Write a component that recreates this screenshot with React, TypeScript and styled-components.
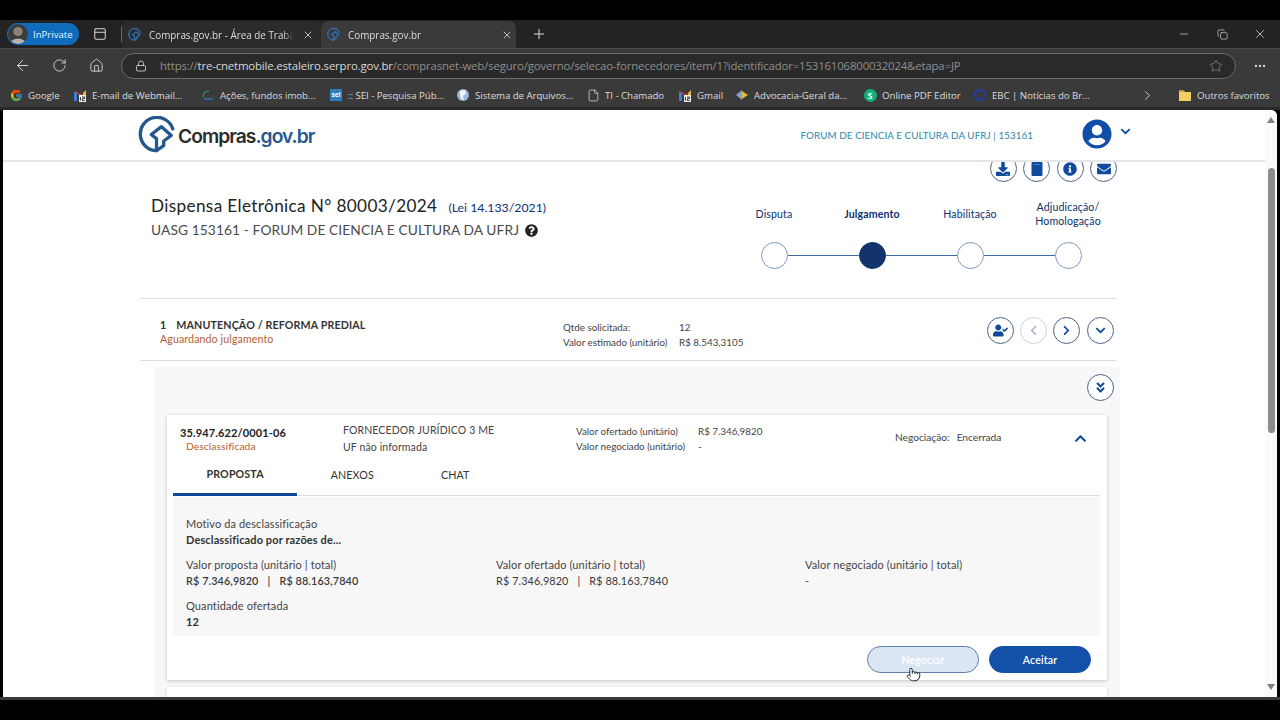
import React from "react";
import styled, { createGlobalStyle } from "styled-components";
import { ArrowLeft, RotateCw, Home, Lock, Star, MoreHorizontal, X, Plus, Minus, Copy, ChevronRight, File, Pointer, PanelTop } from "lucide-react";
import { FaDownload, FaInfoCircle, FaEnvelope, FaUserCheck, FaChevronLeft, FaChevronRight, FaChevronDown, FaChevronUp, FaAngleDoubleDown, FaQuestionCircle, FaUserCircle } from "react-icons/fa";
import { FcGoogle } from "react-icons/fc";

const Global = createGlobalStyle`
  html, body { margin: 0; padding: 0; background: #000; overflow: hidden; }
  * { box-sizing: border-box; }
`;

const Screen = styled.div`
  width: 1280px; height: 720px; background: #000; display: flex; flex-direction: column; overflow: hidden;
  font-family: "Open Sans", "Noto Sans", sans-serif;
`;
const TabStrip = styled.div`
  margin-top: 20px; height: 28px; background: #232323; display: flex; align-items: flex-end; color: #ddd; font-size: 9.9px; flex: none;
`;
const Pill = styled.div`
  margin: 0 0 3px 7px; width: 72px; height: 22px; border-radius: 11px; background: #0f6cbd; color: #e8f2fb;
  display: flex; align-items: center; gap: 5px; font-size: 9.6px;
`;
const Avatar = styled.span`
  width: 20px; height: 20px; margin-left: 1px; border-radius: 50%; background: #3c3c3c; overflow: hidden; display: block; flex: none;
`;
const StripIcon = styled.span`
  width: 42px; height: 28px; display: flex; align-items: center; justify-content: center; color: #e6e6e6;
`;
const Divider = styled.span`
  width: 1px; height: 16px; background: #666; margin-bottom: 6px; flex: none;
`;
const Tab = styled.div<{ $active?: boolean }>`
  width: ${p => (p.$active ? 195 : 199)}px; height: 27px; padding: 0 ${p => (p.$active ? 3 : 7)}px 0 6px; display: flex; align-items: center;
  gap: 8px; border-radius: 7px 7px 0 0; background: ${p => (p.$active ? "#3a3a3a" : "#2b2b2b")}; white-space: nowrap; flex: none;
`;
const TabLabel = styled.span`
  flex: 1; min-width: 0; overflow: hidden; padding-right: 4px; -webkit-mask-image: linear-gradient(90deg, #000 92%, transparent);
`;
const NewTab = styled.span`
  width: 46px; height: 28px; display: flex; align-items: center; justify-content: center; color: #e6e6e6;
`;
const WindowControls = styled.div`
  margin-left: auto; display: flex; height: 28px; align-items: center; color: #e0e0e0; padding-right: 1px;
`;
const WinBtn = styled.span`
  width: 38px; display: flex; justify-content: center;
`;
const Toolbar = styled.div`
  height: 35px; background: #3a3a3a; box-shadow: inset 0 1px 0 #4a4a4a; display: flex; align-items: center; padding-left: 4px; color: #dcdcdc; flex: none; overflow: hidden;
`;
const NavBtn = styled.span`
  width: 37px; flex: none; display: flex; justify-content: center;
`;
const Address = styled.div`
  width: 1115px; height: 26px; margin-left: 6px; border: 1px solid #6a6a6a; border-radius: 13px; background: #2a2a2a; flex: none;
  display: flex; align-items: center; padding: 0 12px 0 13px; gap: 13px; font-size: 11.4px; color: #8e8e8e; white-space: nowrap; overflow: hidden;
`;
const Url = styled.span`
  flex: 1; min-width: 0; overflow: hidden; letter-spacing: -0.16px;
`;
const Host = styled.span`
  color: #d8d8d8;
`;
const More = styled.span`
  width: 47px; flex: none; display: flex; justify-content: center;
`;
const Bookmarks = styled.div`
  height: 24px; background: #3a3a3a; display: flex; align-items: center; padding-left: 9px; font-size: 9.7px; color: #dadada; flex: none; white-space: nowrap;
`;
const Bookmark = styled.div<{ $w: number }>`
  width: ${p => p.$w}px; flex: none; display: flex; align-items: center; gap: 5px; letter-spacing: -0.05px;
`;
const BookmarkIcon = styled.span`
  width: 14px; height: 14px; flex: none; display: flex; align-items: center; justify-content: center;
`;
const SeiBadge = styled.span`
  width: 12px; height: 12px; background: #2d7fc1; color: #fff; font-size: 6.5px; font-weight: 700; line-height: 12px; text-align: center; display: block;
`;
const SBadge = styled.span`
  width: 13px; height: 13px; border-radius: 50%; background: #10b07b; color: #fff; font-size: 9px; font-weight: 700; line-height: 13px; text-align: center; display: block;
`;
const OverflowMark = styled.div`
  width: 38px; margin-left: 25px; flex: none; display: flex; align-items: center;
`;
const GapBar = styled.div`
  height: 3px; background: #2a2a2a; flex: none;
`;
const Viewport = styled.div`
  height: 587px; margin: 0 3px; background: #fff; border-radius: 0 6px 0 0; display: flex; flex: none; overflow: hidden;
  font-family: "Lato", "Open Sans", sans-serif; color: #333; font-size: 10.6px; letter-spacing: 0.12px;
`;
const BottomEdge = styled.div`
  height: 3px; background: #3a3a3a; flex: none;
`;
const Page = styled.div`
  flex: 1; min-width: 0; display: flex; flex-direction: column; overflow: hidden;
`;
const Header = styled.header`
  position: relative; z-index: 2; height: 52px; flex: none; background: #fff; border-bottom: 2px solid #e6e6e6;
  display: flex; align-items: center; padding: 0 134px 2px 135px;
`;
const Brand = styled.div`
  display: flex; align-items: center; gap: 3px; font-family: "Inter", sans-serif; font-size: 19.2px; font-weight: 600; letter-spacing: -0.95px; color: #2c2c2c;
`;
const BrandText = styled.span`
  margin-top: 4px;
`;
const BrandGov = styled.span`
  color: #25588f;
`;
const Org = styled.span`
  margin-left: auto; color: #2d86ad; font-size: 9.8px; letter-spacing: 0.08px; margin-top: 1px;
`;
const UserArea = styled.div`
  margin-left: 49px; display: flex; align-items: flex-start; gap: 8px; color: #0f4ea8;
`;
const CaretWrap = styled.span`
  display: flex; margin-top: 7px;
`;
const Main = styled.main`
  width: 976px; margin-left: 138px; display: flex; flex-direction: column;
`;
const TopActions = styled.div`
  display: flex; justify-content: flex-end; gap: 6.4px; margin-top: -7px;
`;
const Round = styled.span<{ $off?: boolean }>`
  width: 27px; height: 27px; border-radius: 50%; flex: none; background: #fff; display: flex; align-items: center; justify-content: center;
  border: 1px solid ${p => (p.$off ? "#c6d2dd" : "#4d6488")}; color: ${p => (p.$off ? "#a9bacb" : "#0f4a9c")};
`;
const Summary = styled.section`
  display: flex; justify-content: space-between; padding: 14px 0 29px 10px; border-bottom: 1px solid #ddd;
`;
const TitleBlock = styled.div`
  display: flex; flex-direction: column;
`;
const TitleRow = styled.div`
  display: flex; align-items: baseline; gap: 11px; font-size: 17.2px; color: #222; line-height: 20px; letter-spacing: 0.35px;
`;
const Law = styled.span`
  font-size: 12.3px; color: #0c326f; letter-spacing: 0;
`;
const Uasg = styled.div`
  margin-top: 2px; display: flex; align-items: center; gap: 6px; font-size: 13.75px; color: #4a4a4a; line-height: 20px; letter-spacing: 0.1px;
`;
const HelpIcon = styled.span`
  display: flex; color: #222;
`;
const Stepper = styled.div`
  width: 392px; display: flex; padding-top: 4px;
`;
const Step = styled.div`
  width: 98px; display: flex; flex-direction: column; align-items: center;
`;
const StepLabel = styled.div<{ $on?: boolean }>`
  height: 28px; display: flex; align-items: center; text-align: center; line-height: 14px; color: #0c326f;
  font-weight: ${p => (p.$on ? 700 : 400)}; font-size: 10.6px;
`;
const Track = styled.div`
  margin-top: 14px; width: 100%; display: flex; align-items: center;
`;
const Line = styled.span<{ $none?: boolean }>`
  flex: 1; height: 1px; background: ${p => (p.$none ? "transparent" : "#3f6b9f")};
`;
const Dot = styled.span<{ $on?: boolean }>`
  width: 27px; height: 27px; border-radius: 50%; flex: none; border: 1px solid ${p => (p.$on ? "#12336b" : "#7d99ba")};
  background: ${p => (p.$on ? "#12336b" : "#fff")};
`;
const ItemRow = styled.section`
  height: 62px; display: flex; align-items: center; padding: 0 3.5px 0 19px; border-bottom: 1px solid #ddd;
`;
const ItemInfo = styled.div`
  width: 403px; margin-top: 5px; display: flex; flex-direction: column; line-height: 15px;
`;
const ItemTitle = styled.div`
  font-size: 10.7px; font-weight: 700; color: #333; display: flex; gap: 10px;
`;
const Warn = styled.div`
  color: #b5602f;
`;
const Pairs = styled.div<{ $col: number; $drop?: number }>`
  display: grid; grid-template-columns: ${p => p.$col}px auto; line-height: 15px; color: #444; font-size: 9.8px; letter-spacing: 0;
  margin-top: ${p => p.$drop ?? 0}px;
`;
const RoundGroup = styled.div`
  margin-left: auto; margin-top: 1px; display: flex; gap: 6.2px;
`;
const Panel = styled.section`
  margin: 6px 0 0 13px; width: 966px; background: #f8f8f8; padding: 7px 6px 0 13px; display: flex; flex-direction: column;
`;
const PanelTools = styled.div`
  display: flex; justify-content: flex-end; margin-bottom: 14px;
`;
const Card = styled.article`
  width: 940px; flex: none; background: #fff; box-shadow: 0 1px 4px rgba(0,0,0,.22); padding: 0 7px 0 6px;
`;
const CardTop = styled.div`
  height: 47px; display: grid; grid-template-columns: 163px 233px 319px 1fr; padding-left: 7px; align-items: center;
`;
const Cnpj = styled.div`
  color: #222; font-weight: 700; font-size: 11px; line-height: 15px; margin-top: 1px;
`;
const Status = styled(Warn)`
  font-weight: 400; font-size: 10.2px; padding-left: 6px; line-height: 13px;
`;
const Supplier = styled.div`
  line-height: 17px; font-size: 10.5px; color: #444; margin-top: 1px;
`;
const Negotiation = styled.div`
  display: flex; align-items: center; gap: 7px; color: #444; padding-right: 20px; font-size: 10.2px; letter-spacing: 0; margin-top: -3px;
`;
const Collapse = styled.span`
  margin-left: auto; margin-top: 2px; margin-right: -7px; display: flex; color: #0f4a9c;
`;
const Tabs = styled.nav`
  height: 34px; display: flex; border-bottom: 1px solid #ddd; margin-bottom: 1px; font-size: 10.7px; color: #333;
`;
const TabLink = styled.div<{ $on?: boolean }>`
  padding: 0 33.5px 9px; height: 34px; display: flex; align-items: center;
  font-weight: ${p => (p.$on ? 700 : 400)}; border-bottom: ${p => (p.$on ? "3px solid #0f4496" : "none")};
`;
const Detail = styled.div`
  height: 139px; background: #f7f7f7; padding: 19px 13px 6px; display: flex; flex-direction: column; gap: 9px; line-height: 16px; font-size: 11px; color: #444;
`;
const DetailGrid = styled.div`
  display: grid; grid-template-columns: 310px 309px 1fr;
`;
const Strong = styled.div`
  font-weight: 700; color: #333;
`;
const Money = styled.div<{ $strong?: boolean }>`
  display: flex; font-size: 10.8px; gap: 9px; color: #3a3a3a; font-weight: ${p => (p.$strong ? 600 : 400)};
`;
const Actions = styled.div`
  display: flex; justify-content: flex-end; gap: 10px; padding: 10px 9px 7px 0;
`;
const Btn = styled.span<{ $ghost?: boolean }>`
  position: relative; height: 27px; width: ${p => (p.$ghost ? 112 : 102)}px; border-radius: 14px; display: flex; align-items: center; justify-content: center;
  font-weight: 600; color: #fff; font-size: 10.6px;
  background: ${p => (p.$ghost ? "#dbe6f5" : "#1351a8")}; border: 1px solid ${p => (p.$ghost ? "#5d7ea8" : "#1351a8")};
`;
const Cursor = styled.span`
  position: absolute; left: 38px; top: 20px; display: flex; color: #222;
`;
const NextCard = styled.div`
  margin-top: 7px; width: 940px; height: 30px; flex: none; background: #fff; box-shadow: 0 1px 4px rgba(0,0,0,.15);
`;
const Scrollbar = styled.div`
  width: 12px; flex: none; background: #fafafa; display: flex; flex-direction: column; align-items: center; padding-top: 7px;
`;
const Thumb = styled.div`
  width: 7px; height: 265px; margin-top: 45px; border-radius: 4px; background: #8b8b8b;
`;
const Arrow = styled.span<{ $down?: boolean }>`
  width: 0; height: 0; border-left: 4px solid transparent; border-right: 4px solid transparent; flex: none;
  ${p => (p.$down ? "border-top: 6px solid #7f7f7f; margin-top: auto; margin-bottom: 7px;" : "border-bottom: 6px solid #7f7f7f;")}
`;

const Logo = ({ size, color }: { size: number; color: string }) => (
  <svg width={size} height={size} viewBox="0 0 40 40" fill="none" stroke={color} strokeWidth={size > 20 ? 3.6 : 4.4} strokeLinejoin="round" strokeLinecap="round">
    <path d="M37.6 13.9 A18 18 0 1 0 20 37.5" />
    <path d="M20 37.5 L27.8 32 V27 L36 21 L25.4 11.5 L14.3 20 L20 24.5 Z" />
  </svg>
);

const AvatarArt = () => (
  <Avatar>
    <svg width="20" height="20" viewBox="0 0 20 20">
      <circle cx="10" cy="7.5" r="4.6" fill="#8d8277" />
      <path d="M2 20 C3 13 17 13 18 20 Z" fill="#b9b4ac" />
    </svg>
  </Avatar>
);

const BookIcon = () => (
  <svg width="12" height="14" viewBox="0 0 12 14">
    <path d="M1.5 0 H10.5 A1 1 0 0 1 11.5 1 V13 A1 1 0 0 1 10.5 14 H1.5 A1 1 0 0 1 .5 13 V1 A1 1 0 0 1 1.5 0 Z" fill="currentColor" />
    <path d="M3 2.4 H9" stroke="#6f95c8" strokeWidth=".7" />
  </svg>
);

const MailIcon = () => (
  <svg width="14" height="14" viewBox="0 0 14 14">
    <path d="M1 3 L4 5.5 V13 H1 Z" fill="#3b7fd9" />
    <path d="M13 2 L10 5 V8 H13 Z" fill="#e9b13b" />
    <path d="M1 3 L7 8 L13 2 L10 5 L7 6 L4 4 Z" fill="#d8392f" />
    <rect x="6" y="7" width="7" height="7" fill="#f2f2f2" />
    <path d="M7.4 9 V12.6 M9 9 H11.6 V10.6 H9.4 V12.6 H11.6" stroke="#333" strokeWidth="1" fill="none" />
  </svg>
);

const ArcIcon = () => (
  <svg width="14" height="14" viewBox="0 0 14 14" fill="none" strokeWidth="1.5">
    <path d="M2 9 C2 5 5 3 8 3" stroke="#2b8f5f" />
    <path d="M3 11 H12" stroke="#2b6fc1" />
  </svg>
);

const GlobeIcon = () => (
  <svg width="14" height="14" viewBox="0 0 14 14">
    <circle cx="7" cy="7" r="6" fill="#9bb8d6" />
    <path d="M4 3 L9 2 L10 6 L7 8 L8 12 L5 11 L4 7 Z" fill="#eef3f8" />
  </svg>
);

const AguIcon = () => (
  <svg width="14" height="14" viewBox="0 0 14 14">
    <path d="M1 7 L7 2 L7 12 Z" fill="#7fa3c9" />
    <path d="M7 3 L13 7 L7 11 Z" fill="#e2b93b" />
  </svg>
);

const EbcIcon = () => (
  <svg width="14" height="14" viewBox="0 0 14 14" fill="none">
    <circle cx="7" cy="7" r="5" stroke="#233f96" strokeWidth="2.4" />
  </svg>
);

const FolderIcon = () => (
  <svg width="14" height="13" viewBox="0 0 14 13">
    <path d="M1 1.5 H5.5 L7 3 H13 V12 H1 Z" fill="#f3cf63" />
    <path d="M1 1.5 H5.5 L7 3 H1 Z" fill="#d9a93a" />
  </svg>
);

const steps = [
  { label: "Disputa" },
  { label: "Julgamento", on: true },
  { label: "Habilitação" },
  { label: "Adjudicação/\nHomologação" },
];

const marks = [
  { w: 64, icon: <FcGoogle size={13} />, text: "Google" },
  { w: 128, icon: <MailIcon />, text: "E-mail de Webmail..." },
  { w: 128, icon: <ArcIcon />, text: "Ações, fundos imob..." },
  { w: 127, icon: <SeiBadge>sei</SeiBadge>, text: ":: SEI - Pesquisa Púb..." },
  { w: 130, icon: <GlobeIcon />, text: "Sistema de Arquivos..." },
  { w: 92, icon: <File size={13} strokeWidth={1.4} />, text: "TI - Chamado" },
  { w: 57, icon: <MailIcon />, text: "Gmail" },
  { w: 128, icon: <AguIcon />, text: "Advocacia-Geral da..." },
  { w: 110, icon: <SBadge>S</SBadge>, text: "Online PDF Editor" },
  { w: 142, icon: <EbcIcon />, text: "EBC | Notícias do Br..." },
];

export default function App() {
  return (
    <Screen>
      <Global />
      <TabStrip>
        <Pill><AvatarArt />InPrivate</Pill>
        <StripIcon><PanelTop size={14} strokeWidth={1.6} /></StripIcon>
        <Divider />
        <Tab>
          <Logo size={13} color="#2f6db5" />
          <TabLabel>Compras.gov.br - Área de Trabalh</TabLabel>
          <X size={12} strokeWidth={1.6} />
        </Tab>
        <Tab $active>
          <Logo size={13} color="#2f6db5" />
          <TabLabel>Compras.gov.br</TabLabel>
          <X size={12} strokeWidth={1.6} />
        </Tab>
        <NewTab><Plus size={16} strokeWidth={1.4} /></NewTab>
        <WindowControls>
          <WinBtn><Minus size={12} strokeWidth={1.3} /></WinBtn>
          <WinBtn><Copy size={11} strokeWidth={1.4} /></WinBtn>
          <WinBtn><X size={14} strokeWidth={1.3} /></WinBtn>
        </WindowControls>
      </TabStrip>
      <Toolbar>
        <NavBtn><ArrowLeft size={17} strokeWidth={1.4} /></NavBtn>
        <NavBtn><RotateCw size={15} strokeWidth={1.4} /></NavBtn>
        <NavBtn><Home size={15} strokeWidth={1.4} /></NavBtn>
        <Address>
          <Lock size={12} strokeWidth={1.6} color="#e0e0e0" />
          <Url>https://<Host>tre-cnetmobile.estaleiro.serpro.gov.br</Host>/comprasnet-web/seguro/governo/selecao-fornecedores/item/1?identificador=15316106800032024&amp;etapa=JP</Url>
          <Star size={14} strokeWidth={1.3} />
        </Address>
        <More><MoreHorizontal size={14} /></More>
      </Toolbar>
      <Bookmarks>
        {marks.map(m => (
          <Bookmark key={m.text} $w={m.w}>
            <BookmarkIcon>{m.icon}</BookmarkIcon>
            {m.text}
          </Bookmark>
        ))}
        <OverflowMark><ChevronRight size={15} strokeWidth={1.4} /></OverflowMark>
        <Bookmark $w={92}><BookmarkIcon><FolderIcon /></BookmarkIcon>Outros favoritos</Bookmark>
      </Bookmarks>
      <GapBar />
      <Viewport>
        <Page>
          <Header>
            <Brand>
              <Logo size={37} color="#25588f" />
              <BrandText>Compras<BrandGov>.gov.br</BrandGov></BrandText>
            </Brand>
            <Org>FORUM DE CIENCIA E CULTURA DA UFRJ | 153161</Org>
            <UserArea>
              <FaUserCircle size={30} />
              <CaretWrap><FaChevronDown size={11} /></CaretWrap>
            </UserArea>
          </Header>
          <Main>
            <TopActions>
              <Round><FaDownload size={14} /></Round>
              <Round><BookIcon /></Round>
              <Round><FaInfoCircle size={14} /></Round>
              <Round><FaEnvelope size={14} /></Round>
            </TopActions>
            <Summary>
              <TitleBlock>
                <TitleRow>Dispensa Eletrônica N° 80003/2024 <Law>(Lei 14.133/2021)</Law></TitleRow>
                <Uasg>UASG 153161 - FORUM DE CIENCIA E CULTURA DA UFRJ <HelpIcon><FaQuestionCircle size={13} /></HelpIcon></Uasg>
              </TitleBlock>
              <Stepper>
                {steps.map((s, i) => (
                  <Step key={s.label}>
                    <StepLabel $on={s.on}>{s.label.includes("\n") ? <span>Adjudicação/<br />Homologação</span> : s.label}</StepLabel>
                    <Track>
                      <Line $none={i === 0} />
                      <Dot $on={s.on} />
                      <Line $none={i === 3} />
                    </Track>
                  </Step>
                ))}
              </Stepper>
            </Summary>
            <ItemRow>
              <ItemInfo>
                <ItemTitle><span>1</span><span>MANUTENÇÃO / REFORMA PREDIAL</span></ItemTitle>
                <Warn>Aguardando julgamento</Warn>
              </ItemInfo>
              <Pairs $col={116} $drop={10}>
                <span>Qtde solicitada:</span><span>12</span>
                <span>Valor estimado (unitário)</span><span>R$ 8.543,3105</span>
              </Pairs>
              <RoundGroup>
                <Round><FaUserCheck size={15} /></Round>
                <Round $off><FaChevronLeft size={11} /></Round>
                <Round><FaChevronRight size={11} /></Round>
                <Round><FaChevronDown size={11} /></Round>
              </RoundGroup>
            </ItemRow>
            <Panel>
              <PanelTools><Round><FaAngleDoubleDown size={13} /></Round></PanelTools>
              <Card>
                <CardTop>
                  <div>
                    <Cnpj>35.947.622/0001-06</Cnpj>
                    <Status>Desclassificada</Status>
                  </div>
                  <Supplier>
                    <div>FORNECEDOR JURÍDICO 3 ME</div>
                    <div>UF não informada</div>
                  </Supplier>
                  <Pairs $col={122}>
                    <span>Valor ofertado (unitário)</span><span>R$ 7.346,9820</span>
                    <span>Valor negociado (unitário)</span><span>-</span>
                  </Pairs>
                  <Negotiation>
                    <span>Negociação:</span><span>Encerrada</span>
                    <Collapse><FaChevronUp size={13} /></Collapse>
                  </Negotiation>
                </CardTop>
                <Tabs>
                  <TabLink $on>PROPOSTA</TabLink>
                  <TabLink>ANEXOS</TabLink>
                  <TabLink>CHAT</TabLink>
                </Tabs>
                <Detail>
                  <div>
                    <div>Motivo da desclassificação</div>
                    <Strong>Desclassificado por razões de...</Strong>
                  </div>
                  <DetailGrid>
                    <div>
                      <div>Valor proposta (unitário | total)</div>
                      <Money $strong><span>R$ 7.346,9820</span><span>|</span><span>R$ 88.163,7840</span></Money>
                    </div>
                    <div>
                      <div>Valor ofertado (unitário | total)</div>
                      <Money><span>R$ 7.346,9820</span><span>|</span><span>R$ 88.163,7840</span></Money>
                    </div>
                    <div>
                      <div>Valor negociado (unitário | total)</div>
                      <div>-</div>
                    </div>
                  </DetailGrid>
                  <div>
                    <div>Quantidade ofertada</div>
                    <Strong>12</Strong>
                  </div>
                </Detail>
                <Actions>
                  <Btn $ghost>
                    Negociar
                    <Cursor><Pointer size={15} strokeWidth={1.5} fill="#fff" /></Cursor>
                  </Btn>
                  <Btn>Aceitar</Btn>
                </Actions>
              </Card>
              <NextCard />
            </Panel>
          </Main>
        </Page>
        <Scrollbar>
          <Arrow />
          <Thumb />
          <Arrow $down />
        </Scrollbar>
      </Viewport>
      <BottomEdge />
    </Screen>
  );
}
